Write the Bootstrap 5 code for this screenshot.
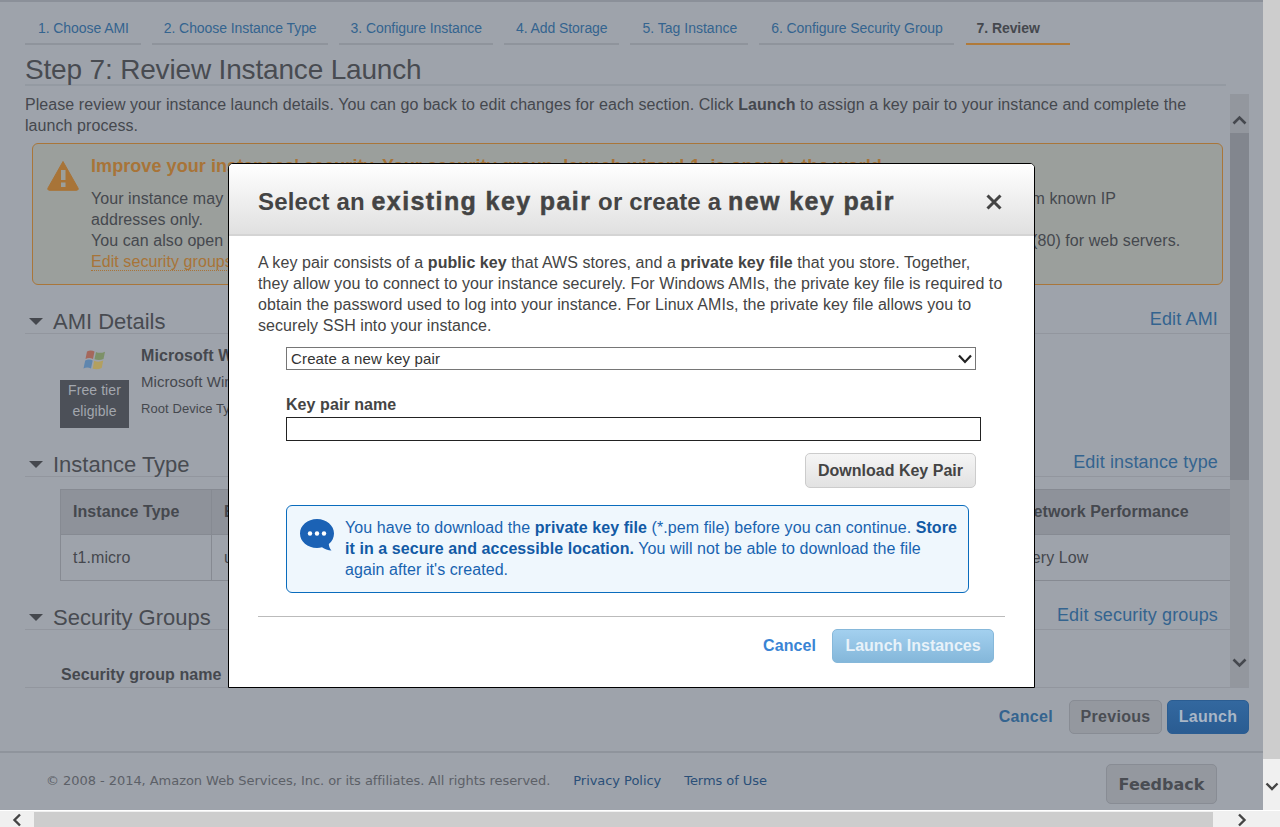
<!DOCTYPE html>
<html lang="en">

<head>
    <meta charset="UTF-8">
    <meta name="viewport" content="width=device-width, initial-scale=1.0">
    <title>Step 7: Review Instance Launch</title>
    <link href="https://cdn.jsdelivr.net/npm/bootstrap@5.3.0/dist/css/bootstrap.min.css" rel="stylesheet">
    <style>
        html, body { height: 827px; overflow: hidden; }
        body {
            position: relative;
            font-family: "Liberation Sans", Arial, sans-serif;
            font-size: 16px;
            line-height: 21px;
            letter-spacing: .07px;
            color: #45484e;
            background: #f0f0f0;
        }

        a { text-decoration: none; color: #34648f; }

        /* window frame with its scrollbars */
        .win-row { height: 810px; }
        .page-area {
            width: 1263px;
            height: 810px;
            background: #9ea3ab;
            border-top: 2px solid #8b9099;
            overflow: hidden;
        }
        .vbar { width: 17px; height: 810px; background: #f0f0f0; }
        .vbar-thumb { height: 759px; background: #cdcdcd; }
        .hbar { height: 17px; background: #f0f0f0; border-top: 1px solid #fff; }
        .hbar-thumb { width: 1179px; height: 15px; background: #cdcdcd; }

        /* wizard tabs */
        .wiz-tabs { padding: 18px 0 0 25px; gap: 11px; }
        .wiz-tab {
            display: block;
            height: 25px;
            padding: 0 11px 0 12px;
            font-size: 14px;
            line-height: 17px;
            letter-spacing: -.08px;
            border-bottom: 2px solid #8f949c;
        }
        .wiz-tab:first-child { padding: 0 12px 0 13px; }
        .wiz-tab:nth-child(5) { padding: 0 11px 0 13px; letter-spacing: 0; }
        .wiz-tab.now { width: 104px; margin-left: 1px; padding-left: 11px; color: #45484e; font-weight: 700; border-bottom-color: #b07a3a; }

        .wiz-title {
            margin: 7px 0 0 25px;
            width: 1201px;
            height: 34px;
            border-bottom: 2px solid #949aa2;
            font-size: 28px;
            line-height: 36px;
            letter-spacing: -.17px;
            font-weight: 400;
            color: #484b51;
        }

        /* inner scrolling region */
        .scroll-zone { margin: 8px 0 0 25px; width: 1224px; height: 594px; border-bottom: 1px solid #92969e; overflow: hidden; }
        .scroll-main { width: 1205px; }
        .scroll-rail { width: 19px; background: #93979e; }
        .rail-thumb { height: 347px; background: #82868e; }
        .rail-btn { height: 39px; padding-top: 14px; }
        .rail-btn-end { flex: 1; padding-top: 171px; }

        .warn-box {
            margin: 7px 7px 0;
            height: 142px;
            padding: 12px 14px 0;
            background: #9b9f9c;
            border: 1px solid #a9763a;
            border-radius: 6px;
            gap: 12px;
        }
        .warn-head { font-size: 18px; font-weight: 700; line-height: 21px; color: #a87438; margin-bottom: 11px; white-space: nowrap; }
        .warn-text { white-space: nowrap; }
        .warn-link { color: #a87438; border-bottom: 1px dotted #a87438; }

        .sect-head {
            margin-top: 23px;
            height: 26px;
            border-bottom: 1px solid #92969e;
            padding-left: 4px;
        }
        .sect-head h2 { font-size: 22px; line-height: 28px; letter-spacing: 0; font-weight: 400; margin: 0 0 0 10px; color: #484b51; }
        .sect-head a { font-size: 18px; line-height: 22px; margin-right: 12px; letter-spacing: .15px; }
        .tri { width: 0; height: 0; border-left: 7px solid transparent; border-right: 7px solid transparent; border-top: 7px solid #45484e; margin-top: 10px; }

        .ami-row { padding: 16px 0 0 35px; gap: 12px; }
        .ami-side { width: 69px; }
        .logo-svg { display: block; margin: 0 auto; }
        .free-tag { width: 69px; height: 48px; margin-top: 10px; background: #4c5058; color: #a3a7ae; font-size: 14px; text-align: center; }
        .ami-name { font-weight: 700; margin-top: -5px; }
        .ami-sub { font-size: 15px; margin-top: 5px; }
        .ami-root { font-size: 13px; margin-top: 6px; }

        .type-table { margin: 12px 0 0 35px; width: 1170px; table-layout: fixed; border-collapse: collapse; }
        .type-table th, .type-table td {
            background: transparent;
            color: #45484e;
            border: 1px solid #868a92;
            padding: 0 12px;
            height: 46px;
            vertical-align: middle;
            white-space: nowrap;
            overflow: hidden;
        }
        .type-table th { height: 45px; padding-bottom: 2px; background: #8e929a; font-weight: 700; }

        .sg-name { padding: 34px 0 0 36px; font-weight: 700; }

        /* wizard buttons */
        .wiz-btns { padding: 12px 14px 0 0; gap: 5px; height: 47px; }
        .wiz-btns a { margin: 6px 11px 0 0; font-weight: 700; letter-spacing: .3px; }
        .wiz-btn {
            width: 93px;
            height: 34px;
            padding: 0;
            font-size: 16px;
            font-weight: 700;
            line-height: 30px;
            border-radius: 5px;
            border: 1px solid #888c94;
            background: #94989f;
            color: #4a4d53;
            letter-spacing: .3px;
        }
        .wiz-btn.go { width: 82px; background: linear-gradient(#33689f, #2a5c92); border-color: #2b5d92; color: #a9b6c6; }

        .foot-bar {
            margin-top: 16px;
            border-top: 2px solid #8f949c;
            height: 58px;
            padding: 11px 46px 0;
            font-size: 13px;
            color: #5c6067;
        }
        .foot-txt { font-family: "DejaVu Sans", Verdana, sans-serif; font-size: 13px; letter-spacing: -.05px; padding-top: 6px; }
        .foot-bar a { color: #2a4f78; margin-left: 23px; }
        .feed-btn {
            height: 40px;
            width: 111px;
            border: 1px solid #888c94;
            border-radius: 5px;
            background: #94989f;
            font-family: "DejaVu Sans", Verdana, sans-serif;
            font-size: 16px;
            font-weight: 700;
            color: #4a4d53;
        }

        /* key pair dialog */
        .kp-dialog {
            position: absolute;
            left: 228px;
            top: 163px;
            width: 807px;
            height: 525px;
            border: 1px solid #000;
            border-radius: 5px 5px 0 0;
            background: #fff;
            color: #444;
        }
        .kp-head {
            height: 72px;
            padding: 4px 29px 0;
            background: linear-gradient(#fff, #e0e0e0);
            border-bottom: 2px solid #d4d4d4;
            border-radius: 4px 4px 0 0;
        }
        .kp-head h3 { margin: 0; font-size: 24px; line-height: 30px; font-weight: 700; color: #444; letter-spacing: .15px; }
        .kp-head b { font-size: 25px; letter-spacing: 1.4px; -webkit-text-stroke: .5px #444; }
        .kp-x { border: 0; background: none; padding: 0; width: 18px; height: 18px; margin: -4px 2px 0 0; }
        .kp-body { padding: 16px 29px 0; }
        .kp-form { padding-left: 28px; }
        .kp-select {
            width: 690px;
            height: 23px;
            margin-top: 11px;
            padding: 0 0 0 4px;
            border: 1px solid #767676;
            border-radius: 0;
            font-size: 15px;
            line-height: 21px;
            letter-spacing: .15px;
            color: #333;
            background-position: right 2px center;
            background-size: 16px 12px;
            background-image: url("data:image/svg+xml,%3csvg xmlns='http://www.w3.org/2000/svg' viewBox='0 0 16 12'%3e%3cpath fill='none' stroke='%23222' stroke-width='2.2' d='M2 2.5l6 6.5 6-6.5'/%3e%3c/svg%3e");
        }
        .kp-label { display: block; margin: 24px 0 2px; font-weight: 700; color: #444; }
        .kp-input { width: 695px; height: 24px; padding: 0 4px; border: 1px solid #222; border-radius: 0; }
        .kp-dl {
            display: block;
            width: 171px;
            height: 35px;
            margin: 12px 0 0 519px;
            padding: 0;
            border: 1px solid #ccc;
            border-radius: 5px;
            background: linear-gradient(#f5f5f5, #e2e2e2);
            font-size: 16px;
            font-weight: 700;
            color: #444;
        }
        .kp-note {
            width: 683px;
            height: 88px;
            margin-top: 17px;
            padding: 11px 2px 0 12px;
            gap: 10px;
            border: 1px solid #0a6cbd;
            border-radius: 6px;
            background: #eff7fd;
            color: #1863b0;
            white-space: nowrap;
        }
        .kp-note svg { margin-top: 1px; }
        .kp-note b { color: #125aa5; }
        .kp-rule { width: 747px; height: 1px; margin: 23px 0 0; background: #bbb; opacity: 1; border: 0; }
        .kp-foot { padding: 12px 11px 0 0; gap: 16px; }
        .kp-foot a { font-weight: 700; color: #3a84d4; margin-top: -2px; }
        .kp-launch {
            width: 162px;
            height: 34px;
            padding: 0 0 2px;
            border: 1px solid #86b8da;
            border-radius: 5px;
            background: linear-gradient(#a3d0ef, #84b7da);
            color: #e8f2f9;
            font-size: 16px;
            font-weight: 700;
        }
    </style>
</head>

<body>
    <div class="d-flex win-row">
        <div class="page-area">
            <div class="d-flex wiz-tabs">
                <a class="wiz-tab" href="#">1. Choose AMI</a>
                <a class="wiz-tab" href="#">2. Choose Instance Type</a>
                <a class="wiz-tab" href="#">3. Configure Instance</a>
                <a class="wiz-tab" href="#">4. Add Storage</a>
                <a class="wiz-tab" href="#">5. Tag Instance</a>
                <a class="wiz-tab" href="#">6. Configure Security Group</a>
                <a class="wiz-tab now" href="#">7. Review</a>
            </div>
            <h1 class="wiz-title">Step 7: Review Instance Launch</h1>

            <div class="d-flex scroll-zone">
                <div class="scroll-main">
                    <p class="m-0">Please review your instance launch details. You can go back to edit changes for each section. Click <b>Launch</b> to assign a key pair to your instance and complete the launch process.</p>

                    <div class="d-flex warn-box">
                        <svg width="32" height="31" viewBox="0 0 32 31" class="flex-shrink-0 mt-1">
                            <path d="M16 1.5L31 28a1.5 1.5 0 0 1-1.3 2.3H2.3A1.5 1.5 0 0 1 1 28z" fill="#a87438" stroke="#a87438" stroke-linejoin="round"/>
                            <rect x="14" y="10" width="4.5" height="10" fill="#9b9f9c"/>
                            <rect x="14" y="22.5" width="4.5" height="4.5" fill="#9b9f9c"/>
                        </svg>
                        <div>
                            <div class="warn-head">Improve your instances' security. Your security group, launch-wizard-1, is open to the world.</div>
                            <div class="warn-text">Your instance may be accessible from any IP address. We recommend that you update your security group rules to allow access from known IP<br>
                            addresses only.<br>
                            You can also open additional ports in your security group to facilitate access to the application or service you're running, e.g., HTTP (80) for web servers.<br>
                            <a class="warn-link" href="#">Edit security groups</a></div>
                        </div>
                    </div>

                    <div class="d-flex align-items-start sect-head">
                        <span class="tri"></span>
                        <h2>AMI Details</h2>
                        <a class="ms-auto" href="#">Edit AMI</a>
                    </div>
                    <div class="d-flex ami-row">
                        <div class="ami-side text-center">
                            <svg width="24" height="20" viewBox="0 0 24 20" class="logo-svg">
                                <path d="M4 1.500c2.500-1.200 5-1.200 7.500 0L10 9c-2.500-1.200-5-1.200-7.500 0z" fill="#a5685c"/>
                                <path d="M13 2c2.500 1.200 5.500 1.200 9-.3L20.500 9c-3 1.300-6 1.300-9 .2z" fill="#7d9168"/>
                                <path d="M2.200 10.500c2.500-1.200 5-1.200 7.500 0L8 18.500c-2.500-1.200-5-1.200-7.500 0z" fill="#5f86ae"/>
                                <path d="M11.200 10.800c3 1.200 6 1.200 9-.2L18.700 18c-3 1.500-6 1.500-9 .8z" fill="#b3a060"/>
                            </svg>
                            <div class="free-tag">Free tier<br>eligible</div>
                        </div>
                        <div>
                            <div class="ami-name">Microsoft Windows Server 2012 R2 Base</div>
                            <div class="ami-sub">Microsoft Windows 2012 R2 Standard edition</div>
                            <div class="ami-root">Root Device Type: ebs</div>
                        </div>
                    </div>

                    <div class="d-flex align-items-start sect-head">
                        <span class="tri"></span>
                        <h2>Instance Type</h2>
                        <a class="ms-auto" href="#">Edit instance type</a>
                    </div>
                    <table class="type-table">
                        <colgroup>
                            <col style="width:151px"><col style="width:140px"><col style="width:140px"><col style="width:140px"><col style="width:200px"><col style="width:178px"><col style="width:221px">
                        </colgroup>
                        <tr><th>Instance Type</th><th>ECUs</th><th>vCPUs</th><th>Memory (GiB)</th><th>Instance Storage (GB)</th><th>EBS-Optimized</th><th>Network Performance</th></tr>
                        <tr><td>t1.micro</td><td>up to 2</td><td>1</td><td>0.613</td><td>EBS only</td><td>-</td><td>Very Low</td></tr>
                    </table>

                    <div class="d-flex align-items-start sect-head">
                        <span class="tri"></span>
                        <h2>Security Groups</h2>
                        <a class="ms-auto" href="#">Edit security groups</a>
                    </div>
                    <div class="sg-name">Security group name</div>
                </div>
                <div class="d-flex flex-column scroll-rail">
                    <div class="rail-btn text-center">
                        <svg width="15" height="10" viewBox="0 0 15 10"><path d="M1.500 8.500L7.500 2.500l6 6" fill="none" stroke="#45484e" stroke-width="2.600"/></svg>
                    </div>
                    <div class="rail-thumb"></div>
                    <div class="rail-btn-end text-center">
                        <svg width="15" height="10" viewBox="0 0 15 10"><path d="M1.500 1.500l6 6 6-6" fill="none" stroke="#45484e" stroke-width="2.600"/></svg>
                    </div>
                </div>
            </div>

            <div class="d-flex justify-content-end align-items-start wiz-btns">
                <a href="#">Cancel</a>
                <button class="wiz-btn" type="button">Previous</button>
                <button class="wiz-btn go" type="button">Launch</button>
            </div>

            <div class="d-flex foot-bar">
                <div class="foot-txt">© 2008 - 2014, Amazon Web Services, Inc. or its affiliates. All rights reserved.<a href="#">Privacy Policy</a><a href="#">Terms of Use</a></div>
                <button class="feed-btn ms-auto" type="button">Feedback</button>
            </div>
        </div>
        <div class="vbar">
            <div class="vbar-thumb"></div>
            <div class="text-center pt-3">
                <svg width="14" height="10" viewBox="0 0 14 10"><path d="M1.500 1.500L7 7l5.500-5.500" fill="none" stroke="#444" stroke-width="2.400"/></svg>
            </div>
        </div>
    </div>
    <div class="d-flex align-items-center hbar">
        <div class="text-center" style="width:34px">
            <svg width="10" height="14" viewBox="0 0 10 14"><path d="M8 1.500L2.500 7 8 12.500" fill="none" stroke="#444" stroke-width="2.400"/></svg>
        </div>
        <div class="hbar-thumb"></div>
        <div class="text-center" style="width:57px">
            <svg width="10" height="14" viewBox="0 0 10 14"><path d="M2 1.500L7.500 7 2 12.500" fill="none" stroke="#444" stroke-width="2.400"/></svg>
        </div>
    </div>

    <div class="kp-dialog">
        <div class="d-flex justify-content-between align-items-center kp-head">
            <h3>Select an <b>existing key pair</b> or create a <b>new key pair</b></h3>
            <button class="kp-x" type="button" aria-label="Close">
                <svg width="18" height="18" viewBox="0 0 18 18"><path d="M2.500 2.500l13 13M15.500 2.500l-13 13" stroke="#444" stroke-width="3"/></svg>
            </button>
        </div>
        <div class="kp-body">
            <div>A key pair consists of a <b>public key</b> that AWS stores, and a <b>private key file</b> that you store. Together,<br>
            they allow you to connect to your instance securely. For Windows AMIs, the private key file is required to<br>
            obtain the password used to log into your instance. For Linux AMIs, the private key file allows you to<br>
            securely SSH into your instance.</div>
            <div class="kp-form">
                <select class="form-select kp-select"><option>Create a new key pair</option></select>
                <label class="kp-label" for="kpName">Key pair name</label>
                <input class="form-control kp-input" id="kpName" type="text">
                <button class="kp-dl" type="button">Download Key Pair</button>
                <div class="d-flex kp-note">
                    <svg width="36" height="33" viewBox="0 0 36 33" class="flex-shrink-0">
                        <path d="M18 1C8.500 1 1 7.500 1 15.500S8.500 30 18 30c1.800 0 3.500-.3 5-.7 2.500 2 6 3.200 9.500 3.200-1.500-1.500-2.500-3.700-2.700-6.500C33 23.500 35 19.700 35 15.500 35 7.500 27.500 1 18 1z" fill="#1b62b5"/>
                        <circle cx="11" cy="15.500" r="2.200" fill="#fff"/><circle cx="18" cy="15.500" r="2.200" fill="#fff"/><circle cx="25" cy="15.500" r="2.200" fill="#fff"/>
                    </svg>
                    <div>You have to download the <b>private key file</b> (*.pem file) before you can continue. <b>Store<br>
                    it in a secure and accessible location.</b> You will not be able to download the file<br>
                    again after it's created.</div>
                </div>
            </div>
            <hr class="kp-rule">
            <div class="d-flex justify-content-end align-items-center kp-foot">
                <a href="#">Cancel</a>
                <button class="kp-launch" type="button" disabled>Launch Instances</button>
            </div>
        </div>
    </div>

    <script src="https://cdn.jsdelivr.net/npm/bootstrap@5.3.0/dist/js/bootstrap.bundle.min.js"></script>
</body>

</html>
